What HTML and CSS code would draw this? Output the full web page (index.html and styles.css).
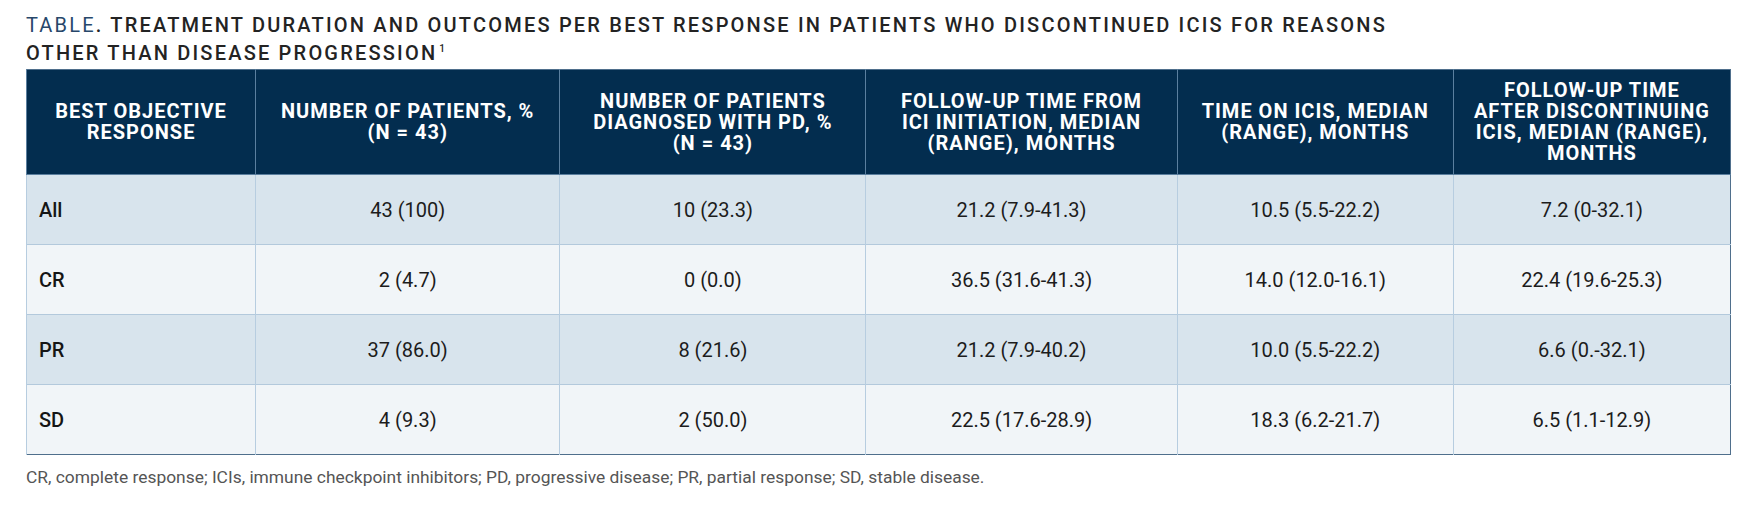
FILE: index.html
```html
<!DOCTYPE html>
<html lang="en">
<head>
<meta charset="utf-8">
<title>Table</title>
<link rel="stylesheet" href="styles.css">
</head>
<body>
<div class="page">
  <h1 class="caption"><span class="caption-label">TABLE</span>. TREATMENT DURATION AND OUTCOMES PER BEST RESPONSE IN PATIENTS WHO DISCONTINUED ICIS FOR REASONS<br>OTHER THAN DISEASE PROGRESSION<sup class="ref">1</sup></h1>
  <table class="data-table">
    <colgroup>
      <col class="c1"><col class="c2"><col class="c3"><col class="c4"><col class="c5"><col class="c6">
    </colgroup>
    <thead>
      <tr>
        <th>BEST OBJECTIVE<br>RESPONSE</th>
        <th>NUMBER OF PATIENTS, %<br>(N = 43)</th>
        <th>NUMBER OF PATIENTS<br>DIAGNOSED WITH PD, %<br>(N = 43)</th>
        <th>FOLLOW-UP TIME FROM<br>ICI INITIATION, MEDIAN<br>(RANGE), MONTHS</th>
        <th>TIME ON ICIS, MEDIAN<br>(RANGE), MONTHS</th>
        <th>FOLLOW-UP TIME<br>AFTER DISCONTINUING<br>ICIS, MEDIAN (RANGE),<br>MONTHS</th>
      </tr>
    </thead>
    <tbody>
      <tr class="row-dark">
        <td class="label">All</td><td>43 (100)</td><td>10 (23.3)</td><td>21.2 (7.9-41.3)</td><td>10.5 (5.5-22.2)</td><td>7.2 (0-32.1)</td>
      </tr>
      <tr class="row-light">
        <td class="label">CR</td><td>2 (4.7)</td><td>0 (0.0)</td><td>36.5 (31.6-41.3)</td><td>14.0 (12.0-16.1)</td><td>22.4 (19.6-25.3)</td>
      </tr>
      <tr class="row-dark">
        <td class="label">PR</td><td>37 (86.0)</td><td>8 (21.6)</td><td>21.2 (7.9-40.2)</td><td>10.0 (5.5-22.2)</td><td>6.6 (0.-32.1)</td>
      </tr>
      <tr class="row-light">
        <td class="label">SD</td><td>4 (9.3)</td><td>2 (50.0)</td><td>22.5 (17.6-28.9)</td><td>18.3 (6.2-21.7)</td><td>6.5 (1.1-12.9)</td>
      </tr>
    </tbody>
  </table>
  <p class="footnote">CR, complete response; ICIs, immune checkpoint inhibitors; PD, progressive disease; PR, partial response; SD, stable disease.</p>
</div>
</body>
</html>
```
FILE: styles.css
```css
html, body {
  margin: 0;
  padding: 0;
  background: #ffffff;
}

.page {
  padding: 11px 0 0 26px;
  font-family: Roboto, "Liberation Sans", sans-serif;
}

.caption {
  margin: 0 0 2px 0;
  font-size: 20px;
  line-height: 28px;
  font-weight: 500;
  letter-spacing: 2.2px;
  color: #232323;
}

.caption-label {
  font-weight: 400;
  color: #27476a;
}

.ref {
  font-size: 10px;
  vertical-align: 8px;
  line-height: 0;
  letter-spacing: 0;
  margin-left: 2px;
}

.data-table {
  border-collapse: collapse;
  width: 1705px;
  table-layout: fixed;
  border: 1px solid #4f6f8c;
}

.c1 { width: 229px; }
.c2 { width: 304px; }
.c3 { width: 306px; }
.c4 { width: 311px; }
.c5 { width: 276px; }
.c6 { width: 277px; }

.data-table th {
  background: #032d4f;
  color: #ffffff;
  font-size: 20px;
  font-weight: 700;
  letter-spacing: 1px;
  line-height: 21px;
  height: 105px;
  padding: 0 8px;
  text-align: center;
  vertical-align: middle;
  border-left: 1px solid #5b7f9f;
  border-bottom: 1px solid #5b7f9f;
  box-sizing: border-box;
}

.data-table td {
  height: 70px;
  padding: 0 12px;
  font-size: 20px;
  line-height: 24px;
  color: #1c1c1c;
  text-align: center;
  vertical-align: middle;
  border-left: 1px solid #b7cde0;
  border-top: 1px solid #b3c9dc;
  box-sizing: border-box;
}

.data-table td.label {
  text-align: left;
  font-weight: 500;
  color: #151515;
}

.row-dark td {
  background: #d8e4ed;
}

.row-light td {
  background: #f1f5f8;
}

.footnote {
  margin: 10px 0 0 0;
  font-size: 17.4px;
  line-height: 24px;
  color: #555555;
}
```
